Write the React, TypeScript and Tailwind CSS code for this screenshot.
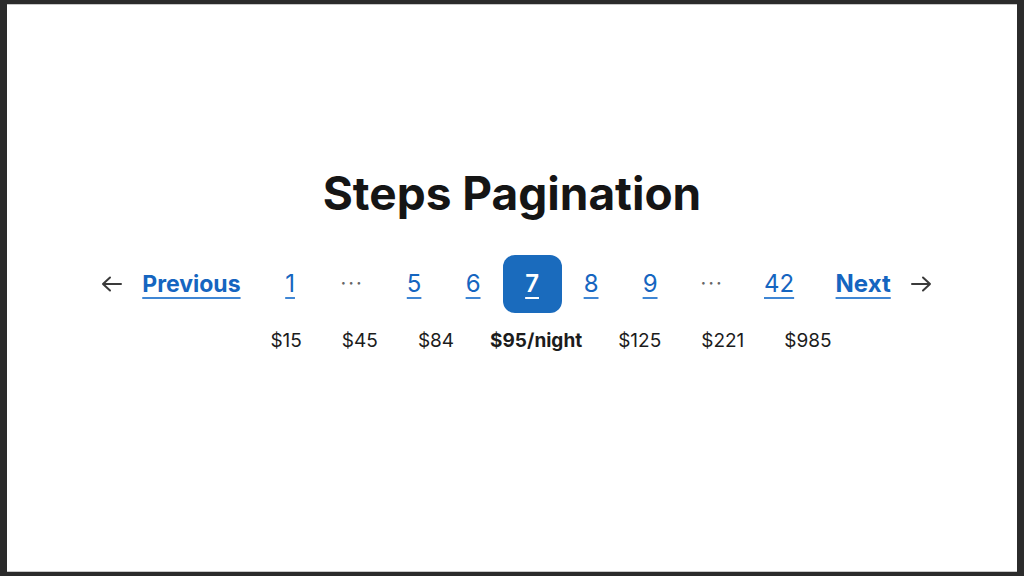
const pages = [
    { label: '1', w: 'w-[59px]' },
    { label: '…', w: 'w-[65px]', dots: true },
    { label: '5', w: 'w-[59px]' },
    { label: '6', w: 'w-[59px]' },
    { label: '7', w: 'w-[59px]', current: true },
    { label: '8', w: 'w-[59px]' },
    { label: '9', w: 'w-[59px]' },
    { label: '…', w: 'w-[65px]', dots: true },
    { label: '42', w: 'w-[69px]' },
]

const prices = ['$15', '$45', '$84', '$95/night', '$125', '$221', '$985']

const link = 'text-[#1565c0] underline decoration-2 underline-offset-[5px] decoration-[#3f86d4]'

function Arrow({ right }: { right?: boolean }) {
    return (
        <svg width="22" height="16" viewBox="0 0 22 16" fill="none" stroke="#3a3a3a" strokeWidth="2" strokeLinecap="round" strokeLinejoin="round" className={right ? 'rotate-180' : ''}>
            <path d="M2 8H20M9 1.5L2 8l7 6.5" />
        </svg>
    )
}

export default function App() {
    return (
        <div className="h-[576px] w-[1024px] bg-[#2b2b2b] pl-[7px] pr-[7px] pt-1 pb-1" style={{ fontFamily: 'Inter, "Noto Sans", sans-serif' }}>
            <div className="h-full bg-white border-t border-[#c8c8c8] border-b flex flex-col items-center pt-[160px]">

                {/*title*/}
                <h1 className="text-[46px] leading-[56px] font-bold text-[#151515]">Steps Pagination</h1>

                {/*pager*/}
                <nav className="mt-[34px] flex items-center h-[58px] pl-[9px]">
                    <Arrow />
                    <a href="#" className={`ml-[19px] mr-5 text-[23px] font-bold ${link}`}>Previous</a>
                    {pages.map((p, i) =>
                        p.dots ? (
                            <span key={i} className={`${p.w} text-center text-[20px] text-[#666] tracking-[2px] -mt-[3px]`}>···</span>
                        ) : p.current ? (
                            <div key={i} className={`${p.w} h-[58px] rounded-[12px] bg-[#1a6bbd] flex items-center justify-center`}>
                                <span className="text-[24px] font-semibold text-white underline decoration-2 underline-offset-[5px]">{p.label}</span>
                            </div>
                        ) : (
                            <div key={i} className={`${p.w} flex justify-center`}>
                                <a href="#" className={`text-[24px] ${link}`}>{p.label}</a>
                            </div>
                        )
                    )}
                    <a href="#" className={`ml-[22px] mr-[19px] text-[24px] font-bold ${link}`}>Next</a>
                    <Arrow right />
                </nav>

                {/*prices*/}
                <div className="mt-[14px] flex gap-10 pl-[78px] text-[19px] leading-7 text-[#1c1c1c]">
                    {prices.map((p) => (
                        <span key={p} className={p === '$95/night' ? 'font-bold -mx-[4px]' : ''}>{p}</span>
                    ))}
                </div>

            </div>
        </div>
    )
}
